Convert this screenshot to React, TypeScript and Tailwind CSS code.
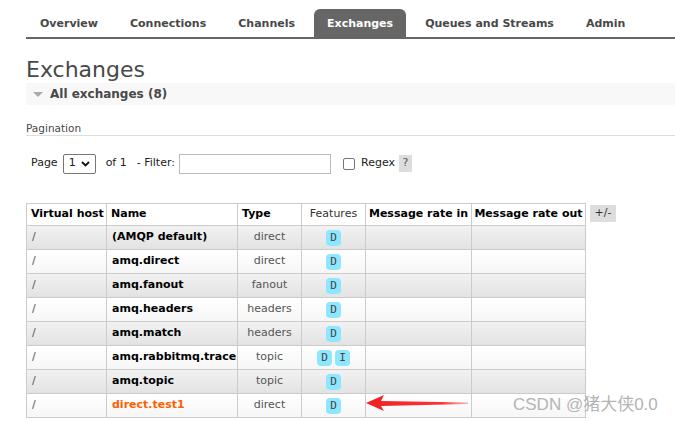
import React from 'react';

const tabs = ['Overview', 'Connections', 'Channels', 'Exchanges', 'Queues and Streams', 'Admin'];

const rows = [
  { name: '(AMQP default)', type: 'direct', features: ['D'] },
  { name: 'amq.direct', type: 'direct', features: ['D'] },
  { name: 'amq.fanout', type: 'fanout', features: ['D'] },
  { name: 'amq.headers', type: 'headers', features: ['D'] },
  { name: 'amq.match', type: 'headers', features: ['D'] },
  { name: 'amq.rabbitmq.trace', type: 'topic', features: ['D', 'I'] },
  { name: 'amq.topic', type: 'topic', features: ['D'] },
  { name: 'direct.test1', type: 'direct', features: ['D'], highlight: true },
];

export default function App() {
  return (
    <div
      className="relative w-[675px] h-[421px] overflow-hidden bg-white text-[#484848] text-[11px]"
      style={{ fontFamily: '"DejaVu Sans", Verdana, sans-serif' }}
    >
      <div className="pl-[26px]">
        {/* Tabs */}
        <div className="h-[39px] border-b-2 border-[#666]">
          <div className="flex items-end h-[37px] -ml-[2px]">
            {tabs.map((t) => (
              <div
                key={t}
                className={
                  t === 'Exchanges'
                    ? 'h-[28px] mx-[3px] px-[13px] pt-[3px] flex items-center bg-[#666] text-white font-bold rounded-t-[6px]'
                    : 'h-[28px] px-[16px] pt-[3px] flex items-center font-bold text-[#484848]'
                }
              >
                {t}
              </div>
            ))}
          </div>
        </div>

        {/* Heading */}
        <h1 className="mt-[17px] text-[22px] leading-[27px] text-[#484848]">Exchanges</h1>
        <div className="h-[22px] bg-[#f8f8f8] flex items-center pl-[7px] gap-[7px]">
          <span className="w-0 h-0 border-l-[5px] border-r-[5px] border-t-[5px] border-l-transparent border-r-transparent border-t-[#aaa]" />
          <span className="font-bold text-[12px]">All exchanges (8)</span>
        </div>

        {/* Pagination */}
        <div className="mt-[17px] text-[10.5px] leading-[13px] border-b border-[#ddd]">Pagination</div>
        <div className="flex items-center mt-[17px] h-[21px] pl-[5px] text-[11px] text-[#222]">
          <span>Page</span>
          <div className="ml-[5px] w-[33px] h-[20px] border border-[#767676] rounded-[2px] flex items-center justify-between px-[5px]">
            <span>1</span>
            <svg width="9" height="6" viewBox="0 0 9 6">
              <path d="M1 1l3.5 3.5L8 1" stroke="#111" strokeWidth="1.8" fill="none" />
            </svg>
          </div>
          <span className="ml-[10px]">of 1</span>
          <span className="ml-[10px]">- Filter:</span>
          <div className="ml-[4px] w-[152px] h-[20px] border border-[#bbb]" />
          <div className="ml-[12px] w-[12px] h-[12px] border border-[#767676] rounded-[2px]" />
          <span className="ml-[6px]">Regex</span>
          <span className="ml-[4px] w-[13px] h-[17px] bg-[#ddd] flex items-center justify-center text-[#555]">?</span>
        </div>

        {/* Table */}
        <div className="flex items-start mt-[29px]">
          <table className="border-collapse text-[11px]">
            <thead>
              <tr className="h-[22px] bg-white">
                <th className="border border-[#ccc] w-[80px] text-left pl-[4px] font-bold text-black">Virtual host</th>
                <th className="border border-[#ccc] w-[131px] text-left pl-[4px] font-bold text-black">Name</th>
                <th className="border border-[#ccc] w-[64px] text-left pl-[4px] font-bold text-black">Type</th>
                <th className="border border-[#ccc] w-[64px] text-center font-normal text-[#333]">Features</th>
                <th className="border border-[#ccc] w-[106px] text-center font-bold text-black">Message rate in</th>
                <th className="border border-[#ccc] w-[114px] text-center font-bold text-black">Message rate out</th>
              </tr>
            </thead>
            <tbody>
              {rows.map((r, i) => (
                <tr
                  key={r.name}
                  className={
                    i % 2 === 0
                      ? 'h-[24px] bg-gradient-to-b from-[#f2f2f2] to-[#e2e2e2]'
                      : 'h-[24px] bg-gradient-to-b from-[#ffffff] to-[#f6f6f6]'
                  }
                >
                  <td className="border border-[#ccc] pl-[5px] align-top pt-[3px] text-[#555]">/</td>
                  <td
                    className={
                      r.highlight
                        ? 'border border-[#ccc] pl-[5px] align-top pt-[3px] font-bold text-[#ff6000]'
                        : 'border border-[#ccc] pl-[5px] align-top pt-[3px] font-bold text-black'
                    }
                  >
                    {r.name}
                  </td>
                  <td className="border border-[#ccc] text-center align-top pt-[3px] text-[#555]">{r.type}</td>
                  <td className="border border-[#ccc] align-top pt-[4px]">
                    <div className="flex justify-center gap-[3px]">
                      {r.features.map((f) => (
                        <span
                          key={f}
                          className="w-[15px] h-[16px] rounded-[4px] bg-[#8fe6ff] flex items-center justify-center text-[#444] text-[11px]"
                          style={{ fontFamily: '"DejaVu Sans Mono", monospace' }}
                        >
                          {f}
                        </span>
                      ))}
                    </div>
                  </td>
                  <td className="border border-[#ccc]" />
                  <td className="border border-[#ccc]" />
                </tr>
              ))}
            </tbody>
          </table>
          <span className="ml-[4px] mt-[2px] w-[26px] h-[17px] bg-[#ddd] flex items-center justify-center text-[11px] text-[#333]">+/-</span>
        </div>
      </div>

      {/* Red annotation arrow */}
      <svg className="absolute left-[364px] top-[394px]" width="108" height="18" viewBox="0 0 108 18">
        <defs>
          <linearGradient id="arrowFade" x1="0" x2="1" y1="0" y2="0">
            <stop offset="0" stopColor="#ee2222" />
            <stop offset="0.75" stopColor="#ff3333" />
            <stop offset="1" stopColor="#ff6666" stopOpacity="0.5" />
          </linearGradient>
        </defs>
        <path d="M2 9 L20 1 L17 7 L104 8.5 L104 10 L17 12 L20 17 Z" fill="url(#arrowFade)" />
      </svg>

      {/* Watermark */}
      <div
        className="absolute left-[513px] top-[392px] text-[17px] text-[#b4b4b4] whitespace-nowrap"
        style={{ fontFamily: 'Arial, "Liberation Sans", "Noto Sans CJK SC", sans-serif' }}
      >
        CSDN @猪大侠0.0
      </div>
    </div>
  );
}
